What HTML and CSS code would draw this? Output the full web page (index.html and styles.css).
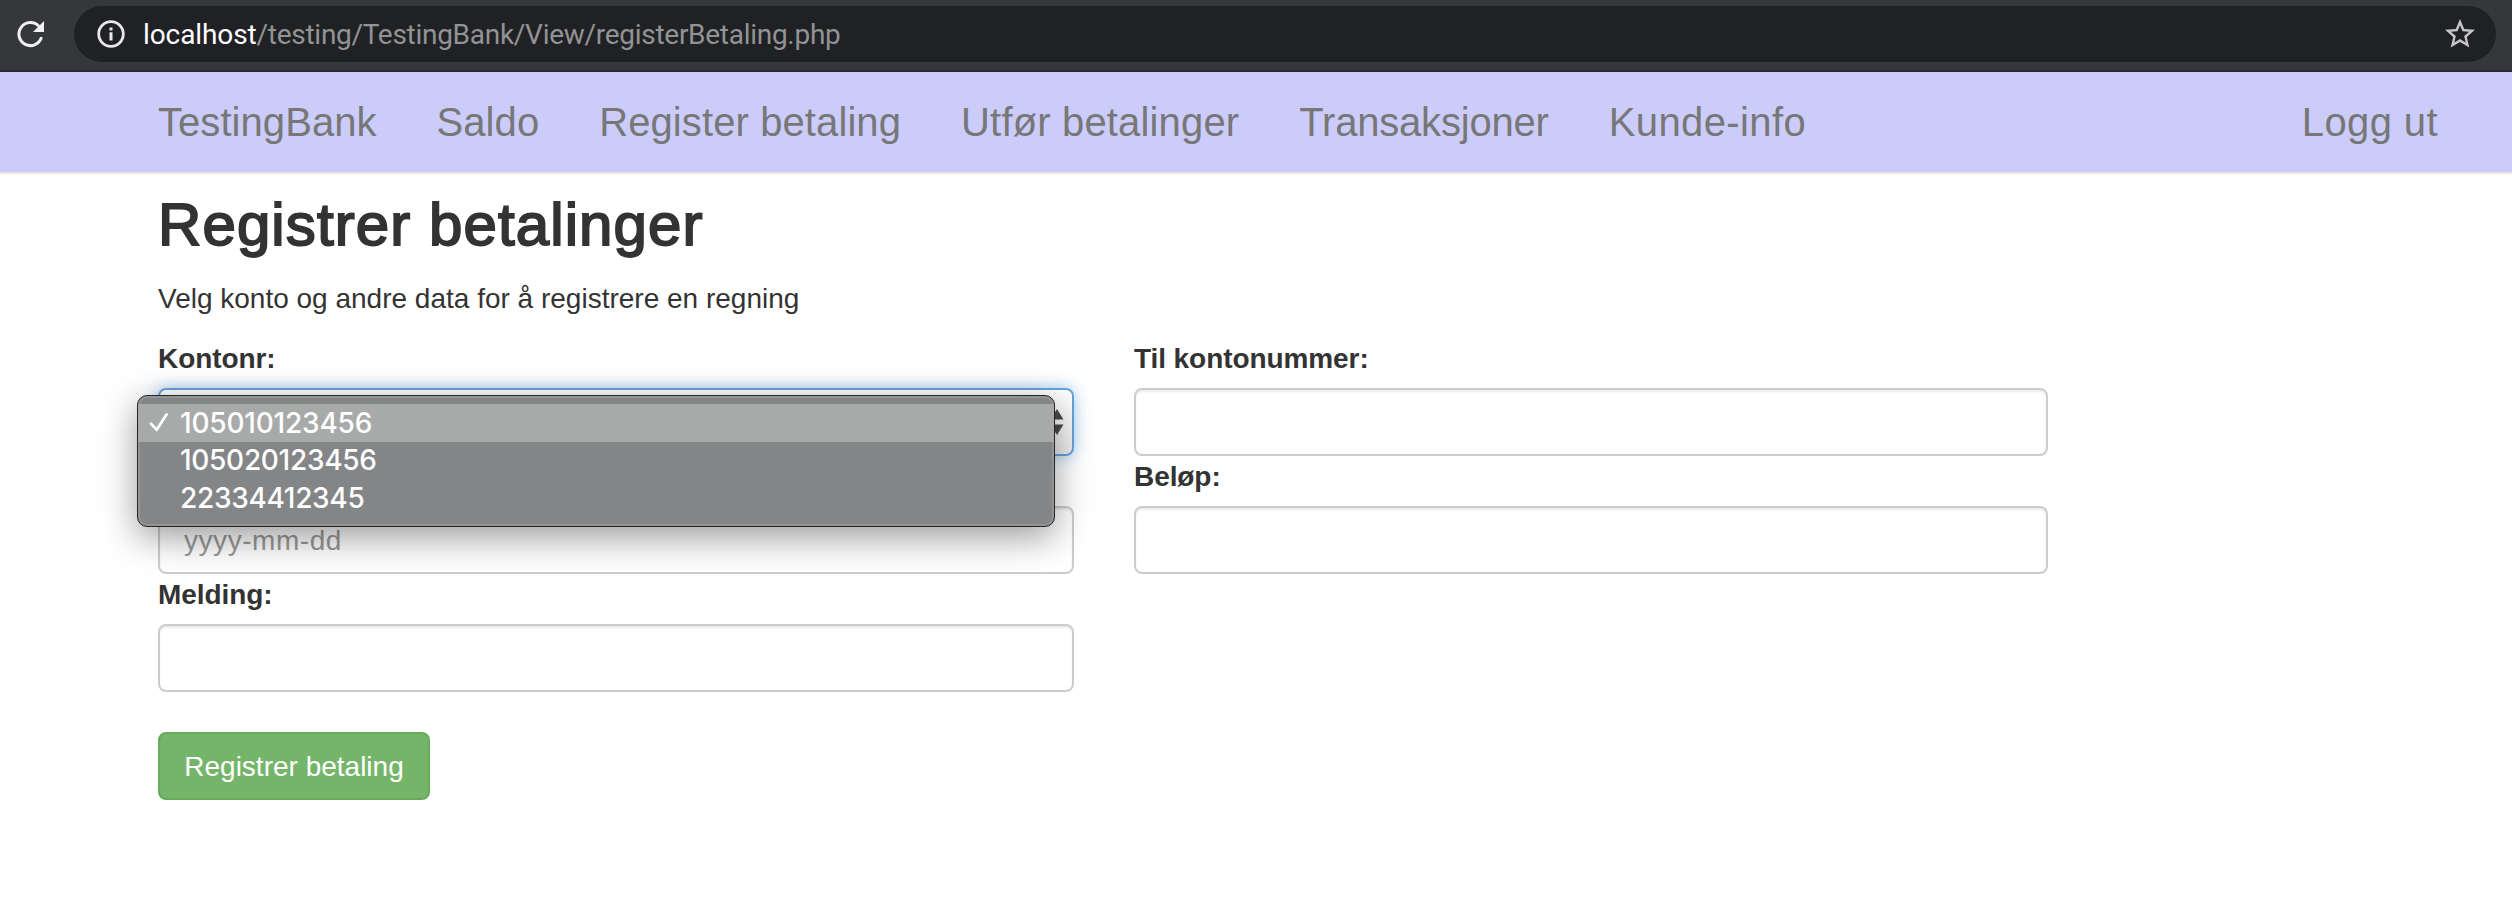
FILE: index.html
```html
<!DOCTYPE html>
<html lang="no">
<head>
<meta charset="utf-8">
<title>Registrer betalinger</title>
<link rel="stylesheet" href="styles.css">
</head>
<body>
<div class="browser-bar">
  <svg class="reload" viewBox="0 0 28 28" width="28" height="28"><path d="M24.500 17.200A11.500 11.500 0 1 1 22 6.400" fill="none" stroke="#f1f1f1" stroke-width="3"/><path d="M27 1v11H16z" fill="#f1f1f1"/></svg>
  <div class="address">
    <svg class="info" viewBox="0 0 28 28" width="28" height="28"><circle cx="14" cy="14" r="12.3" fill="none" stroke="#e8e8e8" stroke-width="2.8"/><path d="M12.5 7.5h3v3h-3zM12.5 12.3h3v8.2h-3z" fill="#e8e8e8"/></svg>
    <div class="url"><span class="host">localhost</span><span class="path">/testing/TestingBank/View/registerBetaling.php</span></div>
    <svg class="star" viewBox="0 0 24 24" width="36" height="36"><path d="M22 9.24l-7.19-.62L12 2 9.190 8.630 2 9.240l5.460 4.730L5.820 21 12 17.270 18.180 21l-1.630-7.030L22 9.240zM12 15.400l-3.760 2.270 1-4.280-3.320-2.880 4.380-.38L12 6.100l1.710 4.040 4.380.38-3.320 2.880 1 4.280L12 15.400z" fill="#c6c6c6"/></svg>
  </div>
</div>
<nav class="navbar">
  <a class="n1">TestingBank</a><a class="n2">Saldo</a><a class="n3">Register betaling</a><a class="n4">Utfør betalinger</a><a class="n5">Transaksjoner</a><a class="n6">Kunde-info</a><a class="logout">Logg ut</a>
</nav>
<main class="container">
  <h2 class="title">Registrer betalinger</h2>
  <p class="lead">Velg konto og andre data for å registrere en regning</p>
  <form class="form">
    <div class="column">
      <label class="label konto">Kontonr:</label>
      <div class="select-wrap">
        <div class="control select"><svg viewBox="0 0 14 28" width="14" height="28"><path d="M7 1l6.500 10.500H.5zM7 27L.5 16.500h13z" fill="#4b4b4b"/></svg></div>
        <div class="menu">
          <div class="option selected"><svg class="check" viewBox="0 0 20 20" width="20" height="20"><path d="M2 10.800L7.700 16.800 17.500 1.500" fill="none" stroke="#fff" stroke-width="2.700" stroke-linecap="round" stroke-linejoin="round"/></svg><span>105010123456</span></div>
          <div class="option">105020123456</div>
          <div class="option third">22334412345</div>
        </div>
      </div>
      <label class="label"></label>
      <div class="control date">yyyy-mm-dd</div>
      <label class="label">Melding:</label>
      <div class="control"></div>
      <button class="submit" type="button">Registrer betaling</button>
    </div>
    <div class="column">
      <label class="label til">Til kontonummer:</label>
      <div class="control"></div>
      <label class="label">Beløp:</label>
      <div class="control"></div>
    </div>
  </form>
</main>
</body>
</html>
```

FILE: styles.css
```css
* { box-sizing: border-box; }
body { margin: 0; width: 2512px; height: 904px; overflow: hidden; background: #fff; color: #333; font: 28px/40px "Liberation Sans", Arial, sans-serif; }
.browser-bar { height: 72px; padding: 6px 16px 8px 0; display: flex; background: #36373b; border-bottom: 2px solid #292a29; }
.reload { margin: 14px 29px 0 17px; }
.address { flex: 1; height: 56px; border-radius: 28px; background: #202124; display: flex; align-items: center; padding: 0 18px 0 23px; }
.url { flex: 1; margin-left: 18px; padding-top: 1px; font: 28px/40px Roboto, sans-serif; letter-spacing: -.1px; white-space: nowrap; }
.host { color: #fff; }
.path { color: #929395; letter-spacing: -.28px; }
.navbar { height: 102px; padding: 0 74px 0 158px; display: flex; gap: 60px; align-items: center; background: #ccccfb; border-bottom: 2px solid #e7e7e7; color: #777; font-size: 40px; white-space: nowrap; }
.n1, .n2 { letter-spacing: .06px; }
.n3 { letter-spacing: .1px; }
.n4 { letter-spacing: .16px; }
.n5 { letter-spacing: -.2px; }
.n6 { letter-spacing: .4px; }
.logout { margin-left: auto; letter-spacing: .4px; }
.container { padding: 18px 0 0 158px; }
.title { margin: 0 0 20px; font-size: 60px; line-height: 66px; font-weight: 400; letter-spacing: 1.1px; -webkit-text-stroke: 1.9px #333; }
.lead { margin: 0 0 20px; padding-top: 1px; height: 40px; }
.form { display: grid; grid-template-columns: 916px 914px; gap: 60px; }
.label { display: block; height: 40px; padding-top: 1px; margin-bottom: 10px; font-weight: 700; letter-spacing: -.08px; }
.control { height: 68px; border: 2px solid #ccc; border-radius: 8px; box-shadow: inset 0 2px 2px rgba(0,0,0,.075); background: #fff; padding: 13px 24px; }
.date { color: #999; letter-spacing: .55px; }
.select-wrap { position: relative; }
.select { border-color: #66a3e0; box-shadow: 0 0 16px rgba(102,175,233,.6); background: linear-gradient(#fff, #f0f0f0); display: flex; justify-content: flex-end; padding: 18px 8px; }
.menu { position: absolute; left: -21px; top: 7px; width: 918px; height: 132px; padding: 8px 0; border: 1px solid #252525; border-radius: 10px; background: #838586; box-shadow: inset 0 0 0 2px rgba(255,255,255,.13), 0 10px 36px rgba(0,0,0,.4); color: #fff; font: 500 28px/36px Inter, sans-serif; letter-spacing: -.3px; }
.option { height: 38px; padding-left: 42px; }
.selected { padding: 0 0 1px 11px; background: #a8a9a9; display: flex; align-items: center; letter-spacing: -.2px; }
.check { margin-right: 11px; }
.submit { display: block; margin: 40px 0 0; width: 272px; height: 68px; padding: 1px 0 0; border: 2px solid #67aa5b; border-radius: 8px; background: #75b56a; color: #fff; font: 28px/40px "Liberation Sans", Arial, sans-serif; }
```
